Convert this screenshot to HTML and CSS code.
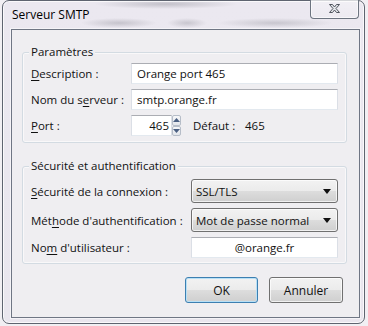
FILE: index.html
```html
<!DOCTYPE html>
<html lang="fr">
<head>
<meta charset="utf-8">
<title>Serveur SMTP</title>
<link rel="stylesheet" href="styles.css">
</head>
<body>
<div class="window">
  <div class="titlebar">
    <span class="title">Serveur SMTP</span>
    <div class="close">
      <svg width="13" height="11" viewBox="0 0 13 11"><path d="M1.5,1.5 H4.5 L6.5,4 L8.5,1.5 H11.5 L8,5.5 L11.5,9.5 H8.5 L6.5,7 L4.5,9.5 H1.5 L5,5.5 Z" fill="#e4e6ea" stroke="#50555e" stroke-width="1" stroke-linejoin="round"/></svg>
    </div>
  </div>
  <div class="client">
    <div class="group g1">
      <div class="group-title"><span>Paramètres</span></div>
      <div class="row r1">
        <span class="lbl w1"><u>D</u>escription :</span>
        <div class="field">Orange port 465</div>
      </div>
      <div class="row">
        <span class="lbl w1">Nom du s<u>e</u>rveur :</span>
        <div class="field">smtp.orange.fr</div>
      </div>
      <div class="row">
        <span class="lbl w1"><u>P</u>ort :</span>
        <div class="field port">465</div>
        <div class="spin">
          <span class="spin-btn"><svg width="7" height="4" viewBox="0 0 7 4"><path d="M0,4 L3.5,0 L7,4 Z" fill="#4a5f82"/></svg></span>
          <span class="spin-btn"><svg width="7" height="4" viewBox="0 0 7 4"><path d="M0,0 L3.5,4 L7,0 Z" fill="#4a5f82"/></svg></span>
        </div>
        <span class="default-lbl">Défaut :</span>
        <span class="default-val">465</span>
      </div>
    </div>
    <div class="group g2">
      <div class="group-title"><span>Sécurité et authentification</span></div>
      <div class="row r1 tall">
        <span class="lbl w2"><u>S</u>écurité de la connexion :</span>
        <div class="combo"><span>SSL/TLS</span><svg width="8" height="5" viewBox="0 0 8 5"><path d="M0,0 H8 L4,5 Z" fill="#111"/></svg></div>
      </div>
      <div class="row tall">
        <span class="lbl w2">Mét<u>h</u>ode d'authentification :</span>
        <div class="combo"><span>Mot de passe normal</span><svg width="8" height="5" viewBox="0 0 8 5"><path d="M0,0 H8 L4,5 Z" fill="#111"/></svg></div>
      </div>
      <div class="row">
        <span class="lbl w2">No<u>m</u> d'utilisateur :</span>
        <div class="field center">@orange.fr</div>
      </div>
    </div>
    <div class="buttons">
      <div class="btn default">OK</div>
      <div class="btn cancel">Annuler</div>
    </div>
  </div>
</div>
</body>
</html>
```
FILE: styles.css
```css
html, body {
  margin: 0;
  padding: 0;
  width: 368px;
  height: 326px;
  overflow: hidden;
  background: #f1eff3;
}
body {
  font-family: "Open Sans", "Noto Sans", "DejaVu Sans", sans-serif;
  font-size: 11.5px;
  color: #111;
}
.window {
  box-sizing: border-box;
  margin-left: 2px;
  width: 363px;
  height: 324px;
  border: 1px solid #5e6470;
  border-radius: 7px;
  padding: 0 4px 5px 8px;
  display: flex;
  flex-direction: column;
  background:
    radial-gradient(ellipse 72px 5px at 163px 3px, rgba(110,110,120,.32), rgba(110,110,120,0) 100%),
    radial-gradient(ellipse 38px 5px at 116px 22px, rgba(110,110,120,.30), rgba(110,110,120,0) 100%),
    radial-gradient(ellipse 20px 5px at 184px 22px, rgba(110,110,120,.28), rgba(110,110,120,0) 100%),
    radial-gradient(ellipse 58px 5px at 272px 22px, rgba(110,110,120,.28), rgba(110,110,120,0) 100%),
    linear-gradient(#ebe8f0, #e9e6ee);
  box-shadow: inset 0 0 0 1px rgba(255,255,255,.75);
}
.titlebar {
  height: 28px;
  display: flex;
  align-items: flex-start;
  justify-content: space-between;
  flex: none;
}
.title {
  margin: 6px 0 0 1px;
  line-height: 16px;
  font-size: 12px;
  color: #000;
}
.close {
  box-sizing: border-box;
  margin: -1px 1px 0 0;
  width: 49px;
  height: 19px;
  border: 1px solid #6d7480;
  border-top: none;
  border-radius: 0 0 4px 4px;
  background: linear-gradient(rgba(255,255,255,.35), rgba(255,255,255,.1));
  box-shadow: inset 0 0 0 1px rgba(255,255,255,.6);
  display: flex;
  align-items: center;
  justify-content: center;
}
.close svg { display: block; margin-top: -1px; }
.client {
  flex: 1;
  border: 1px solid #6f7684;
  background: #efeef1;
  padding: 0 12px 0 10px;
  box-shadow: 0 0 0 1px rgba(255,255,255,.5);
}
.group {
  border: 1px solid #d3dbe2;
  border-radius: 3px;
  padding: 0 8px 6px 8px;
  box-shadow: inset 0 0 0 1px rgba(255,255,255,.6);
}
.g1 { margin-top: 22px; }
.g2 { margin-top: 23px; padding-bottom: 5px; }
.group-title {
  margin-top: -9px;
  height: 16px;
  line-height: 16px;
}
.group-title span {
  background: #efeef1;
  padding: 0 2px;
  margin-left: -2px;
}
.row {
  display: flex;
  align-items: center;
  height: 21px;
  margin-top: 5px;
}
.row.r1 { margin-top: 3px; }
.g2 .row.r1 { margin-top: 5px; }
.row.tall { height: 24px; }
.lbl { flex: none; white-space: nowrap; }
.lbl u { text-decoration-thickness: 1px; text-underline-offset: 2px; }
.w1 { width: 100px; }
.w2 { width: 160px; }
.field {
  box-sizing: border-box;
  flex: 1;
  height: 21px;
  line-height: 19px;
  padding: 0 5px;
  background: #fff;
  border: 1px solid #dbdfe6;
  border-top-color: #abadb3;
  border-bottom-color: #e3e9ef;
  white-space: nowrap;
}
.field.port {
  flex: none;
  width: 41px;
  text-align: right;
  padding: 0 2px 0 0;
}
.field.center { text-align: center; }
.spin {
  flex: none;
  width: 9px;
  height: 21px;
  display: flex;
  flex-direction: column;
}
.spin-btn {
  box-sizing: border-box;
  flex: 1;
  border: 1px solid #b6bdc8;
  border-radius: 2px;
  background: linear-gradient(#f6f7f9, #e3e6eb);
  display: flex;
  align-items: center;
  justify-content: center;
}
.spin-btn svg { display: block; }
.default-lbl {
  flex: none;
  margin-left: 12px;
  width: 52px;
}
.default-val { flex: none; }
.combo {
  box-sizing: border-box;
  flex: 1;
  height: 24px;
  border: 1px solid #707070;
  border-radius: 3px;
  background: linear-gradient(#f2f2f2 0%, #ebebeb 50%, #dddddd 50%, #cfcfcf 100%);
  box-shadow: inset 0 0 0 1px rgba(255,255,255,.7);
  display: flex;
  align-items: center;
  justify-content: space-between;
  padding: 0 6px 0 4px;
  white-space: nowrap;
}
.combo svg { display: block; }
.buttons {
  display: flex;
  justify-content: flex-end;
  gap: 11px;
  margin-top: 13px;
  margin-right: 4px;
}
.btn {
  box-sizing: border-box;
  height: 26px;
  border-radius: 3px;
  display: flex;
  align-items: center;
  justify-content: center;
  font-size: 12px;
  background: linear-gradient(#f2f2f2 0%, #ebebeb 50%, #dddddd 50%, #cfcfcf 100%);
}
.btn.default {
  width: 73px;
  border: 1px solid #3c7fb1;
  box-shadow: inset 0 0 0 1px #b8e0f6;
}
.btn.cancel {
  width: 74px;
  border: 1px solid #707070;
  box-shadow: inset 0 0 0 1px rgba(255,255,255,.7);
}
```
